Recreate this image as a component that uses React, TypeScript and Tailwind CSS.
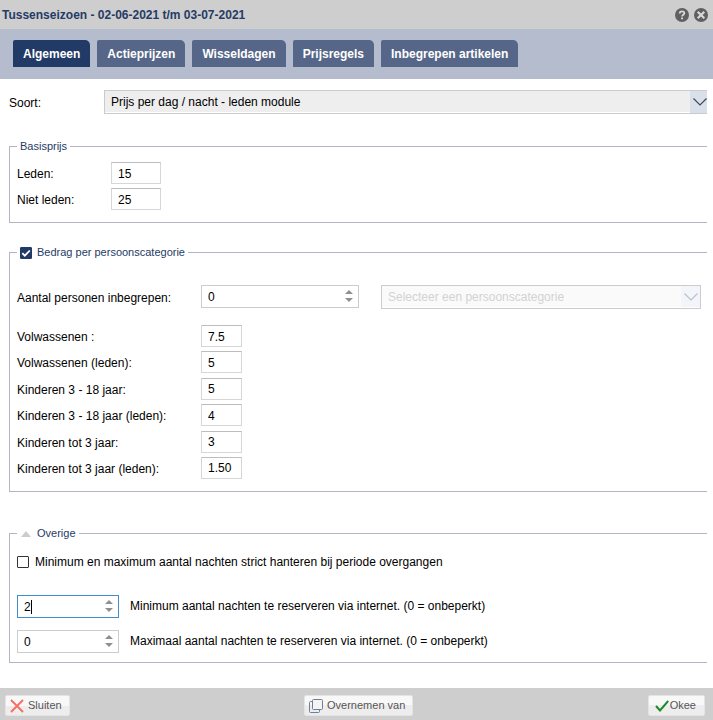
import React, { useState } from "react";

const tabs = [
  "Algemeen",
  "Actieprijzen",
  "Wisseldagen",
  "Prijsregels",
  "Inbegrepen artikelen",
];

const basePrices = [
  { id: "leden", label: "Leden:", value: "15" },
  { id: "niet-leden", label: "Niet leden:", value: "25" },
];

const categories = [
  { id: "volw", label: "Volwassenen :", value: "7.5" },
  { id: "volw-leden", label: "Volwassenen (leden):", value: "5" },
  { id: "kind18", label: "Kinderen 3 - 18 jaar:", value: "5" },
  { id: "kind18-leden", label: "Kinderen 3 - 18 jaar (leden):", value: "4" },
  { id: "kind3", label: "Kinderen tot 3 jaar:", value: "3" },
  { id: "kind3-leden", label: "Kinderen tot 3 jaar (leden):", value: "1.50" },
];

function Chevron({ className }: { className: string }) {
  return (
    <svg
      viewBox="0 0 14 8"
      className={`h-2 w-[14px] shrink-0 ${className}`}
      fill="none"
      stroke="currentColor"
      strokeWidth="1.2"
    >
      <path d="M.5.500l6.500 6.500L13.500.5" />
    </svg>
  );
}

function PriceInput({
  id,
  value,
  className,
}: {
  id: string;
  value: string;
  className: string;
}) {
  const [current, setCurrent] = useState(value);
  return (
    <input
      id={id}
      type="text"
      value={current}
      onChange={(e) => setCurrent(e.target.value)}
      className={`h-[22px] border border-[#d6d6d6] border-t-[#bdbdbd] bg-white pl-[6px] pt-px outline-none ${className}`}
    />
  );
}

function Spinner({
  id,
  initial,
  active = false,
  className,
}: {
  id: string;
  initial: number;
  active?: boolean;
  className: string;
}) {
  const [value, setValue] = useState(initial);
  return (
    <div
      className={`relative flex h-[23px] items-center border bg-white pr-[5px] ${
        active ? "border-[#3f8fcf]" : "border-[#cccccc]"
      } ${className}`}
    >
      <input
        id={id}
        type="text"
        inputMode="numeric"
        value={value}
        onChange={(e) => setValue(Number(e.target.value) || 0)}
        className="h-full min-w-0 flex-1 bg-transparent pl-[6px] pt-px outline-none"
      />
      {active && <span className="absolute left-[13px] top-1 h-[14px] w-px bg-black" />}
      <div className="flex flex-col gap-1 pb-px text-[#8f8f8f]">
        <button type="button" aria-label="Verhogen" onClick={() => setValue(value + 1)}>
          <svg viewBox="0 0 8 4" className="block h-1 w-2" fill="currentColor">
            <path d="M0 4L4 0l4 4z" />
          </svg>
        </button>
        <button
          type="button"
          aria-label="Verlagen"
          onClick={() => setValue(Math.max(0, value - 1))}
        >
          <svg viewBox="0 0 8 4" className="block h-1 w-2" fill="currentColor">
            <path d="M0 0h8L4 4z" />
          </svg>
        </button>
      </div>
    </div>
  );
}

function FooterButton({
  label,
  className,
  children,
}: {
  label: string;
  className: string;
  children: React.ReactNode;
}) {
  return (
    <button
      type="button"
      className={`flex h-[21px] items-center rounded-xs border border-[#e4e4e4] bg-linear-to-b from-[#f8f8f8] from-50% to-[#ededed] to-50% text-[11px] text-[#555555] ${className}`}
    >
      {children}
      <span className="pb-px">{label}</span>
    </button>
  );
}

export default function App() {
  const [tab, setTab] = useState("Algemeen");
  const [perCategory, setPerCategory] = useState(true);
  const [strict, setStrict] = useState(false);

  return (
    <div className="flex min-h-screen flex-col bg-white font-['Liberation_Sans',Arial,sans-serif] text-[12px] leading-[14px] text-black">
      <header className="flex h-[29px] items-center justify-between bg-[#cecece] pl-[2px] pr-[5px]">
        <h1 className="font-bold text-[#253b66]">
          Tussenseizoen - 02-06-2021 t/m 03-07-2021
        </h1>
        <div className="flex gap-[5px]">
          <button type="button" aria-label="Help">
            <svg viewBox="0 0 14 14" className="block size-[14px]">
              <circle cx="7" cy="7" r="7" fill="#606060" />
              <path
                d="M4.700 5.500c0-1.400 1-2.100 2.300-2.100s2.300.7 2.300 1.900c0 1.500-2.200 1.500-2.200 3.200"
                fill="none"
                stroke="#d8d8d8"
                strokeWidth="1.8"
              />
              <path d="M6.100 9.400H8v1.800H6.100z" fill="#d8d8d8" />
            </svg>
          </button>
          <button type="button" aria-label="Venster sluiten">
            <svg viewBox="0 0 14 14" className="block size-[14px]">
              <circle cx="7" cy="7" r="7" fill="#606060" />
              <path d="M3.700 3.700l6.600 6.600M10.300 3.700l-6.600 6.600" stroke="#d8d8d8" strokeWidth="2.2" />
            </svg>
          </button>
        </div>
      </header>

      <nav className="flex gap-[7px] bg-[#b5bccd] pb-3 pl-[13px] pt-[11px]">
        {tabs.map((name) => (
          <button
            key={name}
            type="button"
            onClick={() => setTab(name)}
            className={`h-[27px] rounded-tl-xs rounded-tr-[5px] px-[10px] font-bold text-white ${
              tab === name ? "bg-[#223a66]" : "bg-[#566688]"
            }`}
          >
            {name}
          </button>
        ))}
      </nav>

      <main className="flex flex-1 flex-col pb-[25px] pl-[9px] pr-[6px] pt-[11px]">
        <div className="flex items-center">
          <label htmlFor="soort" className="w-[95px] pt-px">
            Soort:
          </label>
          <div className="relative flex h-6 flex-1 border border-r-0 border-[#c9cccc] pb-px">
            <select
              id="soort"
              className="w-full appearance-none bg-[#eeeeee] pl-[6px] pt-px outline-none"
            >
              <option>Prijs per dag / nacht - leden module</option>
            </select>
            <span className="pointer-events-none absolute inset-y-0 right-0 flex w-[17px] items-center justify-end bg-[#dae0e9]">
              <Chevron className="text-[#3a4a60]" />
            </span>
          </div>
        </div>

        <fieldset className="mt-[26px] border border-r-0 border-[#b4b4c6] pb-3 pl-[7px]">
          <legend className="h-[13px] px-[3px] text-[11px] leading-[13px] text-[#253b66]">
            Basisprijs
          </legend>
          <div className="flex flex-col gap-1 pt-[9px]">
            {basePrices.map((row) => (
              <div key={row.id} className="flex items-center">
                <label htmlFor={row.id} className="w-[94px] pt-[2px]">
                  {row.label}
                </label>
                <PriceInput id={row.id} value={row.value} className="w-[50px]" />
              </div>
            ))}
          </div>
        </fieldset>

        <fieldset className="mt-[23px] border border-r-0 border-[#b4b4c6] pb-3 pl-[7px]">
          <legend className="h-[13px] px-[3px] text-[11px] leading-[13px] text-[#253b66]">
            <label className="flex items-center gap-[5px]">
              <span className="relative size-3">
                <input
                  type="checkbox"
                  checked={perCategory}
                  onChange={(e) => setPerCategory(e.target.checked)}
                  className="block size-3 appearance-none rounded-[1px] border border-[#223a66] checked:bg-[#223a66]"
                />
                {perCategory && (
                  <svg
                    viewBox="0 0 12 12"
                    className="pointer-events-none absolute inset-0"
                    fill="none"
                    stroke="white"
                    strokeWidth="1.8"
                  >
                    <path d="M2.300 6.200l2.500 2.500 5-5.200" />
                  </svg>
                )}
              </span>
              Bedrag per persoonscategorie
            </label>
          </legend>
          <div className="flex items-start pt-[26px]">
            <label htmlFor="aantal" className="w-[184px] self-center pt-px">
              Aantal personen inbegrepen:
            </label>
            <Spinner id="aantal" initial={0} className="w-[158px]" />
            <div className="relative ml-[22px] mr-[6px] flex h-6 flex-1 border border-[#cccccc] pb-px">
              <select
                aria-label="Persoonscategorie"
                disabled
                className="w-full appearance-none bg-[#fafafa] pl-[6px] pt-px text-[#d2d2d2] opacity-100"
              >
                <option>Selecteer een persoonscategorie</option>
              </select>
              <span className="pointer-events-none absolute bottom-px right-0 top-0 flex w-[19px] items-center justify-center bg-[#f3f5fa]">
                <Chevron className="text-[#b9c0c9]" />
              </span>
            </div>
          </div>
          <div className="mt-4 flex min-h-[154px] flex-col justify-between">
            {categories.map((row) => (
              <div key={row.id} className="flex items-center">
                <label htmlFor={row.id} className="w-[184px] pt-[2px]">
                  {row.label}
                </label>
                <PriceInput id={row.id} value={row.value} className="w-[41px]" />
              </div>
            ))}
          </div>
        </fieldset>

        <fieldset className="mt-[35px] border border-r-0 border-[#b4b4c6] pb-[9px] pl-[7px]">
          <legend className="h-[13px] px-[3px] text-[11px] leading-[13px] text-[#253b66]">
            <button type="button" className="flex items-center gap-[5px]">
              <svg viewBox="0 0 12 6" className="h-[6px] w-3" fill="#cccccc">
                <path d="M1 6l5-6 5 6z" />
              </svg>
              Overige
            </button>
          </legend>
          <label className="flex items-center gap-[6px] pt-[15px]">
            <input
              type="checkbox"
              checked={strict}
              onChange={(e) => setStrict(e.target.checked)}
              className="size-3 appearance-none rounded-[1px] border border-[#333333] bg-white checked:bg-[#223a66]"
            />
            Minimum en maximum aantal nachten strict hanteren bij periode overgangen
          </label>
          <div className="mt-[26px] flex flex-col gap-3">
            <div className="flex items-center gap-[11px]">
              <Spinner id="min" initial={2} active className="w-[102px]" />
              <label htmlFor="min" className="pb-px">
                Minimum aantal nachten te reserveren via internet. (0 = onbeperkt)
              </label>
            </div>
            <div className="flex items-center gap-[11px]">
              <Spinner id="max" initial={0} className="w-[102px]" />
              <label htmlFor="max" className="pb-px">
                Maximaal aantal nachten te reserveren via internet. (0 = onbeperkt)
              </label>
            </div>
          </div>
        </fieldset>
      </main>

      <footer className="flex h-8 items-center justify-between bg-[#cecece] pl-[5px] pr-2 pt-[3px]">
        <FooterButton label="Sluiten" className="gap-1 pl-1 pr-[7px]">
          <svg
            viewBox="0 0 14 14"
            className="size-[14px]"
            fill="none"
            stroke="#fb6a5c"
            strokeWidth="1.8"
          >
            <path d="M1 1l12 12M13 1L1 13" />
          </svg>
        </FooterButton>
        <FooterButton label="Overnemen van" className="gap-1 pl-1 pr-[7px]">
          <svg viewBox="0 0 14 14" className="size-[14px]" fill="none" stroke="#6f7f98">
            <path d="M3.500 2.500h-2a1 1 0 0 0-1 1v9a1 1 0 0 0 1 1h8a1 1 0 0 0 1-1v-1.500" />
            <rect x="3.500" y=".5" width="10" height="10" rx="1" fill="#f4f4f4" />
          </svg>
        </FooterButton>
        <FooterButton label="Okee" className="gap-px pl-[6px] pr-2">
          <svg
            viewBox="0 0 14 12"
            className="h-3 w-[14px]"
            fill="none"
            stroke="#1f8a2a"
            strokeWidth="2"
          >
            <path d="M1 6l4 4.500L13.200 1" />
          </svg>
        </FooterButton>
      </footer>
    </div>
  );
}
